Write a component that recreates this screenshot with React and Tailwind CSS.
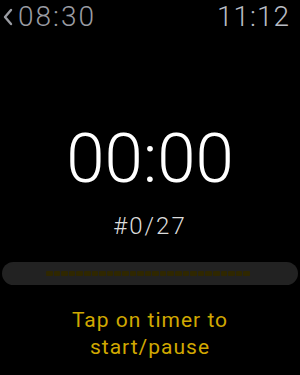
import React from 'react';

const segments = Array.from({ length: 27 });

export default function App() {
  return (
    <div className="w-[300px] h-[375px] bg-black flex flex-col overflow-hidden" style={{ fontFamily: 'Roboto, "Open Sans", sans-serif' }}>
      {/* Header */}
      <div className="flex items-center justify-between h-[34px] pl-[2px] pr-[10px]">
        <div className="flex items-center text-[#9a9ca3]">
          <svg width="12" height="20" viewBox="0 0 12 20" className="mr-[4px]">
            <path d="M9 3 L3 10 L9 17" fill="none" stroke="#9a9ca3" strokeWidth="2.4" strokeLinecap="round" strokeLinejoin="round" />
          </svg>
          <span className="text-[28px] font-light leading-none tracking-[2px]">08:30</span>
        </div>
        <span className="text-[28px] font-light leading-none tracking-[1px] text-[#b8bcc4]">11:12</span>
      </div>

      {/* Timer */}
      <div className="flex flex-col items-center mt-[90px]">
        <span className="text-[69px] font-light leading-none text-white">00:00</span>
        <span className="text-[24px] font-light leading-none tracking-[2px] text-[#dcdcdc] mt-[21px]">#0/27</span>
      </div>

      {/* Progress */}
      <div className="mx-[2px] mt-[24px] h-[23px] rounded-full bg-[#222222] flex items-center justify-center">
        <div className="flex gap-[1px] ml-[-4px]">
          {segments.map((_, i) => (
            <div key={i} className="w-[6.6px] h-[5px] rounded-[1px] bg-[#2f2700]" />
          ))}
        </div>
      </div>

      {/* Hint */}
      <div className="mt-[22px] text-center text-[21px] leading-[27px] tracking-[1px] text-[#d0a800]">
        Tap on timer to<br />start/pause
      </div>
    </div>
  );
}
